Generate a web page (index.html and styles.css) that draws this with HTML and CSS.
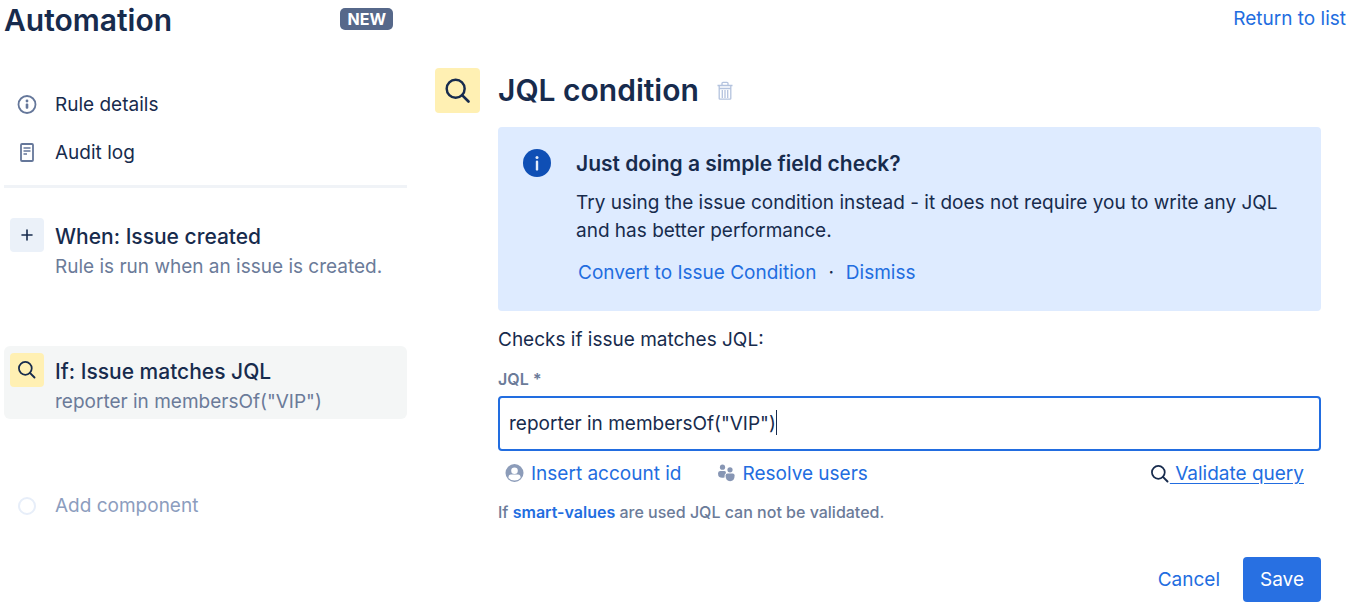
FILE: index.html
```html
<!DOCTYPE html>
<html lang="en">
<head>
<meta charset="utf-8">
<title>Automation</title>
<meta name="viewport" content="width=device-width, initial-scale=1">
<link rel="stylesheet" href="styles.css">
</head>
<body>
<svg class="defs" aria-hidden="true">
  <symbol id="search" viewBox="0 0 24 24"><circle cx="10" cy="10" r="7.700" fill="none" stroke="currentColor" stroke-width="2.100"/><path d="M15.500 15.500l5.500 5.500" fill="none" stroke="currentColor" stroke-width="2.300" stroke-linecap="round"/></symbol>
</svg>
<div class="page">
  <aside class="sidebar">
    <header class="sidebar-head">
      <h1 class="title">Automation</h1>
      <span class="badge">NEW</span>
    </header>
    <nav class="nav">
      <a class="nav-item" href="#"><span class="slot"><svg class="icon-md" viewBox="0 0 20 20"><circle cx="10" cy="9.500" r="8.500" fill="none" stroke="currentColor" stroke-width="1.800"/><circle cx="10" cy="6" r="1.400" fill="currentColor"/><rect x="8.700" y="8.500" width="2.600" height="5.200" rx="1" fill="currentColor"/></svg></span>Rule details</a>
      <a class="nav-item" href="#"><span class="slot"><svg class="icon-md" viewBox="0 0 20 20"><rect x="4" y="1" width="12" height="17" rx="1" fill="none" stroke="currentColor" stroke-width="1.800"/><path d="M6.500 5h7M6.500 8h7M6.500 11h3.500" stroke="currentColor" stroke-width="1.600"/></svg></span>Audit log</a>
    </nav>
    <div class="steps">
      <button class="step" type="button">
        <span class="slot tile tile-blue"><svg class="icon-sm" viewBox="0 0 14 14"><path d="M7 2v10M2 7h10" stroke="currentColor" stroke-width="1.600" stroke-linecap="round"/></svg></span>
        <span class="step-text"><span class="step-title">When: Issue created</span><span class="step-note">Rule is run when an issue is created.</span></span>
      </button>
      <button class="step selected" type="button">
        <span class="slot tile tile-yellow"><svg class="icon-md"><use href="#search"/></svg></span>
        <span class="step-text"><span class="step-title">If: Issue matches JQL</span><span class="step-note">reporter in membersOf("VIP")</span></span>
      </button>
      <button class="add" type="button"><span class="slot"><span class="ring"></span></span>Add component</button>
    </div>
  </aside>
  <main class="main">
    <a class="return link" href="#">Return to list</a>
    <div class="condition">
      <span class="big-tile tile-yellow"><svg class="icon-lg"><use href="#search"/></svg></span>
      <section class="content">
        <div class="heading">
          <h2 class="title">JQL condition</h2>
          <button class="trash" type="button" aria-label="Delete"><svg class="icon-md" viewBox="0 0 20 20" fill="none" stroke="currentColor" stroke-width="1.300"><path d="M2.500 5.500h15M7 5.200V3.300q0-1 1-1h4q1 0 1 1v1.900M3.800 8.500h12.400M4.200 5.500v13q0 .7.8.7h10q.8 0 .8-.7v-13M7.300 10v8M10 10v8M12.700 10v8"/></svg></button>
        </div>
        <div class="info">
          <svg class="info-icon" viewBox="0 0 28 28"><circle cx="14" cy="14" r="14" fill="#0f4fb5"/><circle cx="14" cy="8.600" r="1.500" fill="#e4edfb"/><rect x="12.800" y="11.600" width="2.400" height="10" rx="1.200" fill="#e4edfb"/></svg>
          <div class="info-body">
            <h3 class="info-title">Just doing a simple field check?</h3>
            <p class="info-text">Try using the issue condition instead - it does not require you to write any JQL and has better performance.</p>
            <div class="info-actions"><a class="link" href="#">Convert to Issue Condition</a><span>·</span><a class="link" href="#">Dismiss</a></div>
          </div>
        </div>
        <form class="form">
          <p class="lead">Checks if issue matches JQL:</p>
          <label class="label" for="jql">JQL<span class="star">*</span></label>
          <div class="field-wrap">
            <input class="field" id="jql" type="text" value='reporter in membersOf("VIP")'>
            <span class="caret"></span>
          </div>
          <div class="tools">
            <a class="tool link" href="#"><svg class="icon-md" viewBox="0 0 20 20"><circle cx="9.500" cy="9" r="9" fill="#8c9cb9"/><circle cx="9.500" cy="6.800" r="3.300" fill="#fff"/><path d="M3.500 14v-1q0-2.500 2.500-2.500h7q2.500 0 2.500 2.500v1q-2.200 2.500-6 2.500t-6-2.500z" fill="#fff"/></svg>Insert account id</a>
            <a class="tool link" href="#"><svg class="icon-md" viewBox="0 0 20 20" fill="#8796b4"><circle cx="6.500" cy="3.200" r="2.600"/><circle cx="14" cy="5.800" r="2.600"/><path d="M2 9.500q0-2.500 2-2.500h4.500q1.500 0 1.500 2-1.800 1-1.500 4.500-3.500.8-5.200-.5Q2 11.800 2 9.500z"/><path d="M9.600 11.500q0-2 2-2h5q2 0 2 2 0 5.700-4.500 5.700t-4.500-5.700z"/></svg>Resolve users</a>
            <a class="validate" href="#"><svg class="icon-md"><use href="#search"/></svg><span class="validate-text">&nbsp;Validate query</span></a>
          </div>
          <p class="hint">If <a class="link hint-link" href="#">smart-values</a> are used JQL can not be validated.</p>
          <div class="buttons">
            <button class="btn" type="button">Cancel</button>
            <button class="btn primary" type="submit">Save</button>
          </div>
        </form>
      </section>
    </div>
  </main>
</div>
</body>
</html>
```
FILE: styles.css
```css
* { box-sizing: border-box; }
body { margin: 0; background: #fff; color: #172b4d; font: 19px/28px Inter, "Liberation Sans", sans-serif; }
h1, h2, h3, p { margin: 0; }
button { font: inherit; color: inherit; background: none; border: 0; padding: 0; text-align: left; cursor: pointer; }
svg { display: block; flex: none; }
a { color: inherit; text-decoration: none; }
.defs { position: absolute; width: 0; height: 0; }
.link { color: #226de0; }
.icon-sm { width: 14px; height: 14px; }
.icon-md { width: 20px; height: 20px; }
.icon-lg { width: 28px; height: 28px; }

.page { display: grid; grid-template-columns: minmax(260px, 403px) minmax(0, 1fr); gap: 28px; padding: 0 6px 10px 4px; }
.title { font-size: 30px; line-height: 40px; font-weight: 600; }

.sidebar-head { display: flex; justify-content: space-between; padding-right: 14px; }
.badge { height: 22px; margin-top: 8px; padding: 0 7px; border-radius: 5px; background: #56688a; color: #fff; font-size: 16px; line-height: 22px; font-weight: 700; }
.nav { display: flex; flex-direction: column; padding: 41px 0 8px; border-bottom: 3px solid #f0f3f7; }
.nav-item { display: flex; align-items: center; gap: 11px; height: 48px; padding-left: 6px; }
.slot { display: flex; flex: none; align-items: center; justify-content: center; width: 34px; height: 34px; color: #65779a; }
.tile { border-radius: 4px; color: #172b4d; }
.tile-blue { background: #ebf1f9; }
.tile-yellow { background: #fff0b3; }
.steps { display: flex; flex-direction: column; gap: 62px; margin-top: 23px; }
.step { display: flex; gap: 11px; padding: 7px 6px 3px; border-radius: 6px; }
.selected { background: #f4f6f6; }
.step-text { display: flex; flex-direction: column; gap: 1px; padding-top: 4px; }
.step-title { font-size: 21px; line-height: 30px; font-weight: 500; }
.step-note { color: #6b7b99; }
.add { display: flex; align-items: center; gap: 11px; height: 50px; padding-left: 6px; color: #8c9dbe; }
.ring { width: 18px; height: 18px; border: 2px solid #e7eef9; border-radius: 50%; }

.main { display: flex; flex-direction: column; padding-top: 5px; }
.return { align-self: flex-end; }
.condition { display: grid; grid-template-columns: 45px minmax(0, 1fr); gap: 18px; padding: 35px 25px 0 0; }
.big-tile { display: flex; align-items: center; justify-content: center; height: 45px; border-radius: 4px; }
.heading { display: flex; align-items: center; gap: 16px; height: 43px; margin-bottom: 16px; }
.trash { color: #b4c3de; }
.info { display: flex; gap: 25px; padding: 22px 25px 24px; border-radius: 4px; background: #deebff; }
.info-icon { width: 28px; height: 28px; }
.info-title { font-size: 21px; line-height: 30px; font-weight: 600; }
.info-text { margin-top: 10px; }
.info-actions { display: flex; gap: 12px; margin-top: 14px; padding-left: 2px; }
.form { display: flex; flex-direction: column; }
.lead { margin-top: 15px; }
.label { display: flex; gap: 4px; margin-top: 15px; color: #6b7b99; font-size: 16px; line-height: 20px; font-weight: 600; }
.star { font-weight: 700; }
.field-wrap { position: relative; margin-top: 7px; }
.field { display: block; width: 100%; height: 55px; padding: 0 9px; border: 2px solid #226de0; border-radius: 4px; background: #fff; color: #172b4d; font: inherit; outline: 0; }
.caret { position: absolute; left: 278px; top: 14px; width: 1px; height: 25px; background: #172b4d; }
.tools { display: flex; gap: 35px; margin-top: 9px; padding: 0 17px 0 7px; }
.tool { display: flex; align-items: center; gap: 6px; }
.validate { display: flex; align-items: center; margin-left: auto; }
.validate-text { color: #226de0; text-decoration: underline; text-underline-offset: 3px; }
.hint { margin-top: 13px; color: #6b7b99; font-size: 16px; line-height: 22px; font-weight: 500; }
.hint-link { font-weight: 600; }
.buttons { display: flex; justify-content: flex-end; gap: 6px; margin-top: 34px; }
.btn { height: 45px; padding: 0 17px; border-radius: 4px; color: #226de0; }
.primary { background: #2870e2; color: #fff; }
```
